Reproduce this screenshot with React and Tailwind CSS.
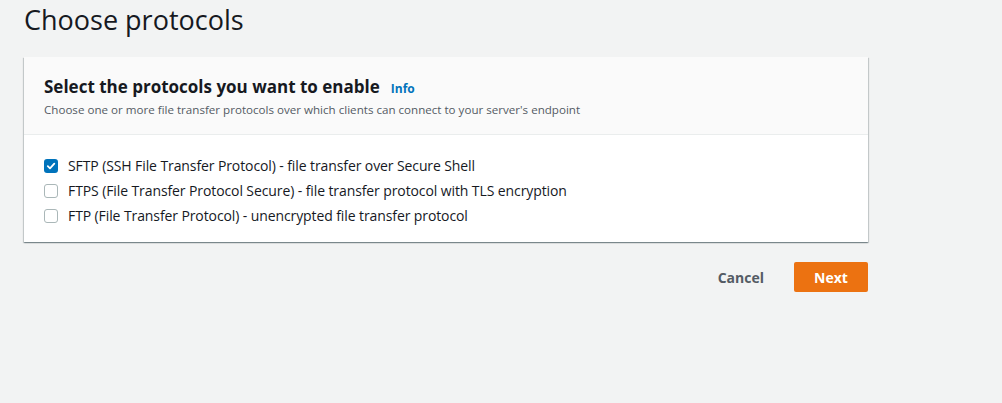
import React from "react";

function Checkbox({ checked }) {
  if (checked) {
    return (
      <span className="flex h-[14px] w-[14px] shrink-0 items-center justify-center rounded-[3px] bg-[#0073bb]">
        <svg width="10" height="10" viewBox="0 0 10 10" fill="none">
          <path d="M1.8 5.2 L4 7.3 L8.3 2.6" stroke="#fff" strokeWidth="1.8" strokeLinecap="round" strokeLinejoin="round" />
        </svg>
      </span>
    );
  }
  return <span className="h-[14px] w-[14px] shrink-0 rounded-[3px] border border-[#aab7b8] bg-white" />;
}

export default function App() {
  const opts = [
    ["SFTP (SSH File Transfer Protocol) - file transfer over Secure Shell", true],
    ["FTPS (File Transfer Protocol Secure) - file transfer protocol with TLS encryption", false],
    ["FTP (File Transfer Protocol) - unencrypted file transfer protocol", false],
  ];
  return (
    <div className="h-[403px] w-[1002px] bg-[#f2f3f3] text-[#16191f]" style={{ fontFamily: '"Open Sans", sans-serif' }}>
      <div className="w-[844px] ml-[24px]">
        <h1 className="pt-[2px] text-[27px] leading-[36px] font-normal">Choose protocols</h1>
        <div className="mt-[19px] bg-white shadow-[0_1px_1px_0_rgba(0,28,36,0.3),1px_1px_1px_0_rgba(0,28,36,0.15),-1px_1px_1px_0_rgba(0,28,36,0.15)]">
          <div className="h-[78px] border-b border-[#eaeded] bg-[#fafafa] px-[20px] pt-[18px]">
            <div className="flex items-baseline gap-[11px]">
              <span className="text-[17px] font-bold leading-[24px]">Select the protocols you want to enable</span>
              <span className="text-[12px] font-bold text-[#0073bb]">Info</span>
            </div>
            <div className="mt-[3px] text-[11.6px] leading-[16px] text-[#545b64]">
              Choose one or more file transfer protocols over which clients can connect to your server's endpoint
            </div>
          </div>
          <div className="flex flex-col gap-[5px] px-[20px] pt-[21px] pb-[16px]">
            {opts.map(([t, c]) => (
              <label key={t} className="flex items-center gap-[10px] text-[14px] leading-[20px]">
                <Checkbox checked={c} />
                <span className="tracking-[-0.1px]">{t}</span>
              </label>
            ))}
          </div>
        </div>
        <div className="mt-[20px] flex items-center justify-end gap-[10px]">
          <button className="h-[30px] px-[20px] text-[14px] font-bold text-[#545b64]">Cancel</button>
          <button className="h-[30px] w-[74px] rounded-[2px] bg-[#ec7211] text-[14px] font-bold text-white">Next</button>
        </div>
      </div>
    </div>
  );
}
